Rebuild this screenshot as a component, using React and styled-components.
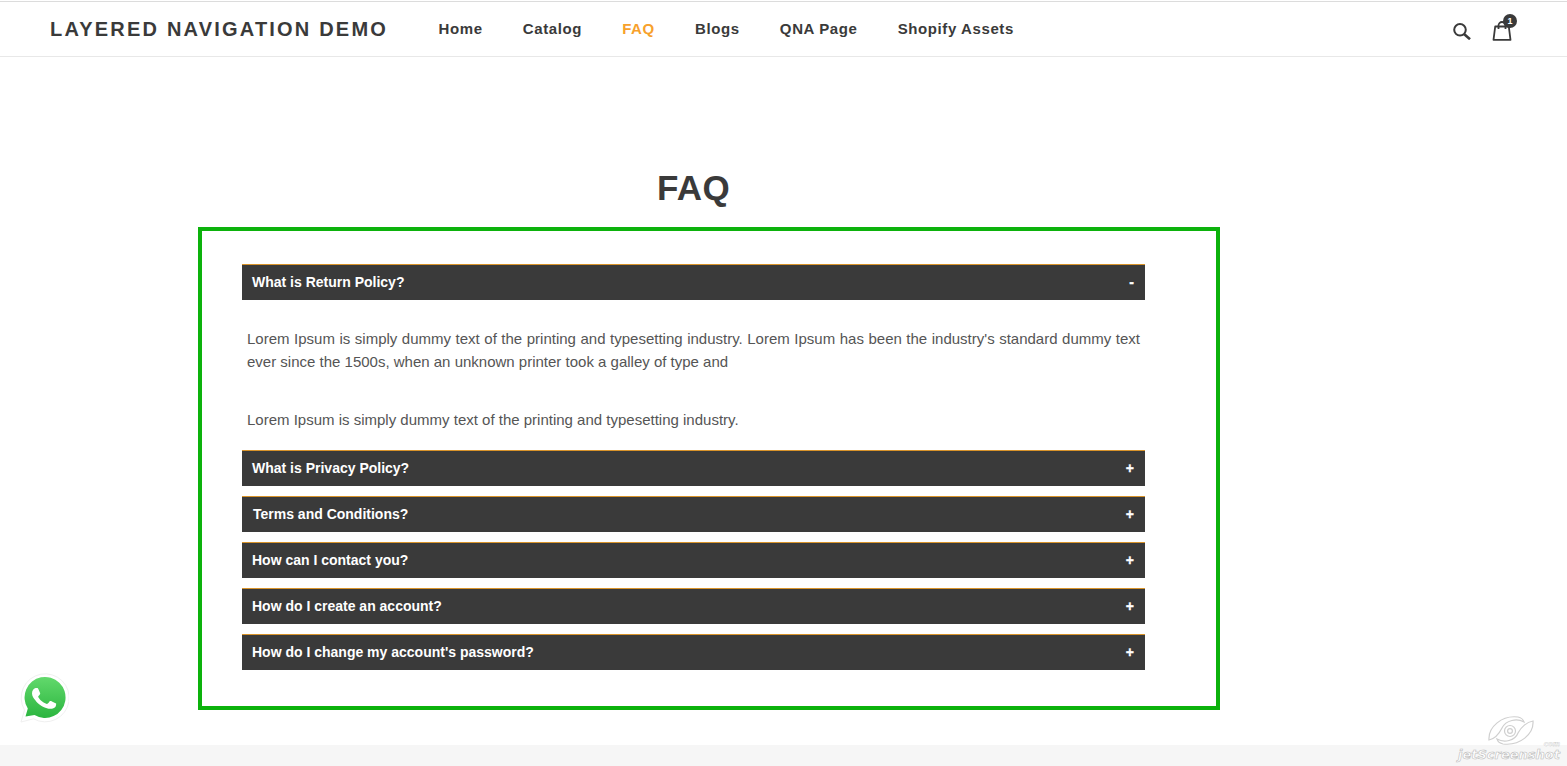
import React from "react";
import styled, { createGlobalStyle } from "styled-components";

const GlobalStyle = createGlobalStyle`
  html, body {
    margin: 0;
    padding: 0;
    background: #fff;
    font-family: "Liberation Sans", Arial, sans-serif;
    color: #3a3a3a;
  }
`;

const Page = styled.div`
  position: relative;
  height: 766px;
  overflow: hidden;
  display: flex;
  flex-direction: column;
`;

const Header = styled.header`
  height: 54px;
  flex: none;
  margin-top: 1px;
  display: flex;
  align-items: center;
  padding: 0 50px;
  border-top: 1px solid #dcdcdc;
  border-bottom: 1px solid #e8e8e8;
`;

const Logo = styled.div`
  font-size: 20px;
  font-weight: 700;
  letter-spacing: 2.2px;
  white-space: nowrap;
  width: 388px;
  flex: none;
`;

const Nav = styled.nav`
  display: flex;
  gap: 40.2px;
  flex: 1;
  padding: 0 0 2px 0.5px;
`;

const NavLink = styled.a`
  font-size: 15px;
  font-weight: 700;
  letter-spacing: 0.6px;
  color: ${({ $active }) => ($active ? "#f7a12c" : "#3a3a3a")};
`;

const Icons = styled.div`
  display: flex;
  align-items: center;
  gap: 21px;
  margin-right: 5px;
  padding-top: 4px;
`;

const CartWrap = styled.div`
  position: relative;
  width: 20px;
  height: 20px;
`;

const CartBadge = styled.span`
  position: absolute;
  top: -7px;
  right: -5px;
  width: 14px;
  height: 14px;
  border-radius: 50%;
  background: #3a3a3a;
  color: #fff;
  font-size: 9px;
  font-weight: 700;
  line-height: 14px;
  text-align: center;
`;

const Main = styled.main`
  flex: 1;
  width: 1022px;
  margin-left: 198px;
  padding-top: 111px;
  display: flex;
  flex-direction: column;
`;

const Title = styled.h1`
  margin: 0 0 20px;
  padding-right: 31px;
  font-size: 35px;
  line-height: 39px;
  font-weight: 700;
  letter-spacing: 0.3px;
  text-align: center;
  color: #3a3a3a;
`;

const FaqBox = styled.section`
  box-sizing: border-box;
  width: 1022px;
  height: 483px;
  border: 4px solid #0cb20c;
  padding: 33px 71px 0 40px;
  display: flex;
  flex-direction: column;
  gap: 10px;
`;

const Item = styled.div`
  display: flex;
  flex-direction: column;
`;

const Question = styled.div`
  box-sizing: border-box;
  height: 36px;
  background: #3a3a3a;
  border-top: 1px solid #d8932a;
  color: #fff;
  font-size: 14px;
  font-weight: 700;
  padding: 0 11px 1px ${({ $inset }) => $inset || 10}px;
  display: flex;
  align-items: center;
  justify-content: space-between;
`;

const Sign = styled.span`
  font-size: 14px;
  font-weight: 700;
  -webkit-text-stroke: 0.3px #fff;
`;

const Answer = styled.div`
  padding: 27px 5px 0;
  height: 140px;
  box-sizing: border-box;
  font-size: 15px;
  line-height: 23px;
  color: #555;
  text-align: justify;
`;

const Para = styled.p`
  margin: 0 0 35px;
`;

const Footer = styled.div`
  height: 21px;
  flex: none;
  background: #f6f6f6;
`;

const WhatsApp = styled.svg`
  position: absolute;
  left: 18px;
  top: 673px;
  width: 51px;
  height: 51px;
`;

const Watermark = styled.div`
  position: absolute;
  right: 7px;
  bottom: 4px;
  width: 102px;
  display: flex;
  flex-direction: column;
  align-items: center;
`;

const WatermarkIcon = styled.svg`
  width: 48px;
  height: 31px;
  margin-bottom: 1px;
  margin-left: 4px;
`;

const WatermarkText = styled.span`
  position: relative;
  font-family: "DejaVu Sans", sans-serif;
  font-size: 13px;
  font-weight: 700;
  font-style: italic;
  line-height: 15px;
  white-space: nowrap;
  color: #fff;
  -webkit-text-stroke: 0.6px #bdbdbd;
`;

const WatermarkCom = styled.span`
  position: absolute;
  right: 0;
  top: -6px;
  font-size: 7px;
  line-height: 7px;
  -webkit-text-stroke: 0.3px #bdbdbd;
`;

const faqs = [
  { q: "What is Privacy Policy?" },
  { q: "Terms and Conditions?", inset: 11 },
  { q: "How can I contact you?" },
  { q: "How do I create an account?" },
  { q: "How do I change my account's password?" },
];

function App() {
  return (
    <Page>
      <GlobalStyle />
      <Header>
        <Logo>LAYERED NAVIGATION DEMO</Logo>
        <Nav>
          <NavLink>Home</NavLink>
          <NavLink>Catalog</NavLink>
          <NavLink $active>FAQ</NavLink>
          <NavLink>Blogs</NavLink>
          <NavLink>QNA Page</NavLink>
          <NavLink>Shopify Assets</NavLink>
        </Nav>
        <Icons>
          <svg width="18" height="17" viewBox="0 0 18 17" fill="none" stroke="#3a3a3a">
            <circle cx="7" cy="6.8" r="5.8" strokeWidth="2" />
            <path d="M11 11 L17 16.2" strokeWidth="2.6" />
          </svg>
          <CartWrap>
            <svg width="20" height="20" viewBox="0 0 20 20" fill="none" stroke="#3a3a3a" strokeWidth="1.8">
              <path d="M3.200 5.500 H16.800 L18.500 18.800 H1.500 Z" strokeLinejoin="round" />
              <path d="M6.500 8 V4.500 a3.500 3.500 0 0 1 7 0 V8" />
            </svg>
            <CartBadge>1</CartBadge>
          </CartWrap>
        </Icons>
      </Header>
      <Main>
        <Title>FAQ</Title>
        <FaqBox>
          <Item>
            <Question>
              What is Return Policy?
              <Sign>-</Sign>
            </Question>
            <Answer>
              <Para>
                Lorem Ipsum is simply dummy text of the printing and typesetting industry. Lorem Ipsum has been the
                industry's standard dummy text ever since the 1500s, when an unknown printer took a galley of type and
              </Para>
              <Para>Lorem Ipsum is simply dummy text of the printing and typesetting industry.</Para>
            </Answer>
          </Item>
          {faqs.map((f) => (
            <Item key={f.q}>
              <Question $inset={f.inset}>
                {f.q}
                <Sign>+</Sign>
              </Question>
            </Item>
          ))}
        </FaqBox>
      </Main>
      <Footer />
      <WhatsApp viewBox="0 0 51 51">
        <defs>
          <linearGradient id="wa" x1="0" y1="0" x2="0" y2="1">
            <stop offset="0" stopColor="#62d96c" />
            <stop offset="1" stopColor="#2bb53f" />
          </linearGradient>
        </defs>
        <path d="M3 49 L6.500 37 A24 24 0 1 1 15.500 45.800 Z" fill="#fff" stroke="#f0f0f0" strokeWidth="1" />
        <path d="M7.500 43.500 L9.800 35.500 A20.500 20.500 0 1 1 16.500 42 Z" fill="url(#wa)" />
        <path
          transform="translate(12.600 10.400) scale(1.17 1.08)"
          fill="#fff"
          d="M6.600 5.200c-.4-.9-.8-.9-1.200-.9h-1c-.4 0-.9.1-1.400.7C2.500 5.500 1.200 6.800 1.200 9.300s1.800 4.900 2.100 5.300c.3.300 3.500 5.600 8.700 7.600 4.300 1.700 5.200 1.400 6.100 1.300.9-.1 3-1.200 3.400-2.400.4-1.200.4-2.200.3-2.400-.1-.2-.5-.3-1-.6-.5-.3-3-1.500-3.500-1.700-.5-.2-.8-.3-1.100.3-.3.5-1.300 1.700-1.600 2-.3.3-.6.400-1.100.1-.5-.3-2.200-.8-4.100-2.500-1.500-1.400-2.500-3-2.800-3.500-.3-.5 0-.8.2-1.100.2-.2.5-.6.8-.9.2-.3.3-.5.5-.9.200-.3.100-.6 0-.9-.1-.3-1.100-2.800-1.500-3.800z"
        />
      </WhatsApp>
      <Watermark>
        <WatermarkIcon viewBox="0 0 48 31" fill="none" stroke="#cfcfcf" strokeWidth="1.2">
          <circle cx="23" cy="16" r="5.500" />
          <circle cx="23" cy="16" r="2.400" />
          <path d="M2 25 C1 12 15 0 31 2 C35 3 36 4 37 7 C30 3 19 5 15 13 C12 19 7 24 2 25 Z" />
          <path d="M46 6 C47 19 33 31 16 29 C12 28 11 27 10 24 C17 28 28 26 31 18 C34 12 40 7 46 6 Z" />
        </WatermarkIcon>
        <WatermarkText>
          jetScreenshot
          <WatermarkCom>com</WatermarkCom>
        </WatermarkText>
      </Watermark>
    </Page>
  );
}

export default App;
